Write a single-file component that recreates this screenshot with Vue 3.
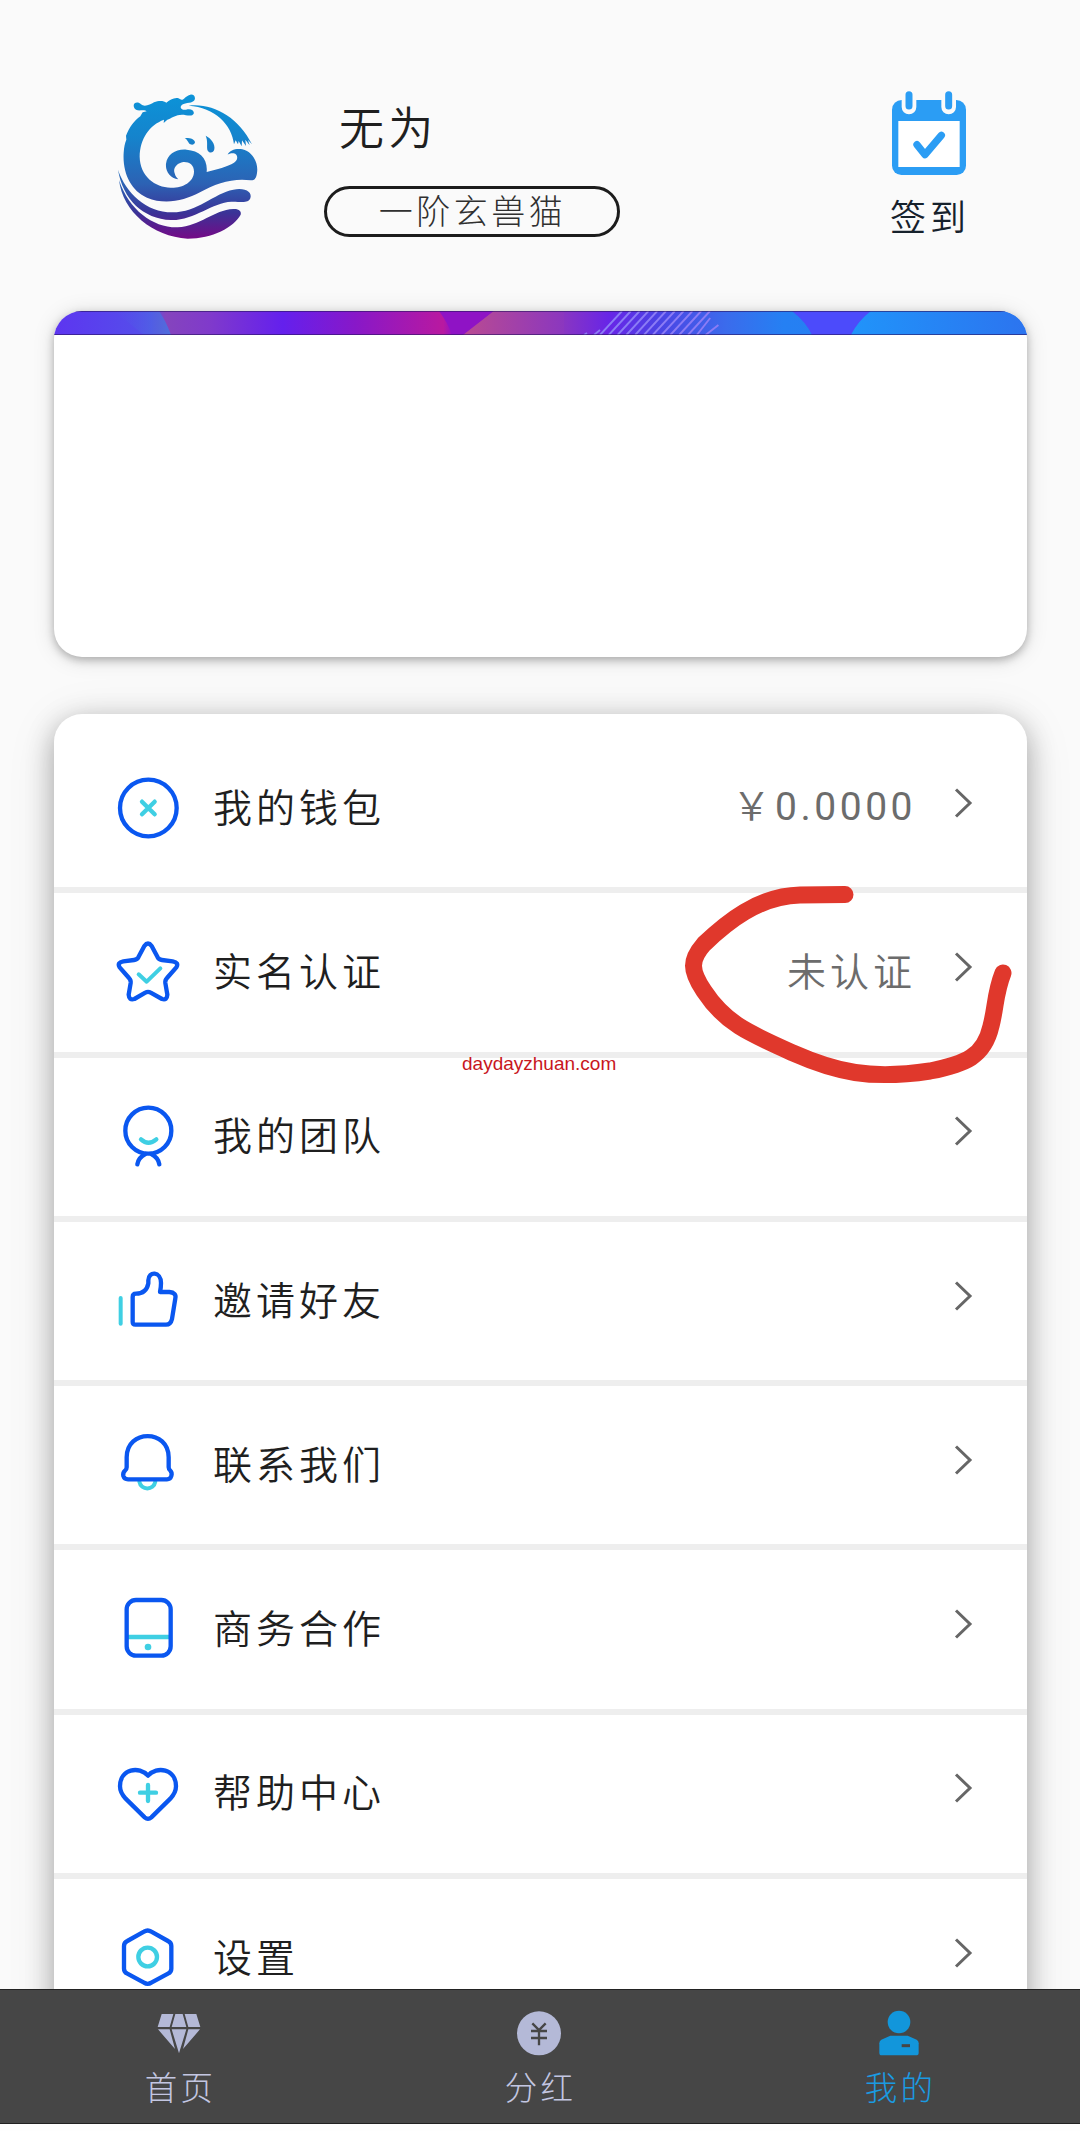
<script setup>
const items = [
  { id: 'wallet', label: '我的钱包', sign: '￥', amount: '0.0000' },
  { id: 'verify', label: '实名认证', note: '未认证' },
  { id: 'team', label: '我的团队' },
  { id: 'invite', label: '邀请好友' },
  { id: 'contact', label: '联系我们' },
  { id: 'business', label: '商务合作' },
  { id: 'help', label: '帮助中心' },
  { id: 'settings', label: '设置' },
]
const hatch = Array.from({ length: 13 }, (_, i) => i)
</script>

<template>
  <div class="page">
    <main class="content">
      <header class="profile">
        <svg class="logo" viewBox="0 0 600 570">
          <defs>
            <linearGradient id="logoFill" gradientUnits="userSpaceOnUse" x1="0" y1="75" x2="0" y2="505">
              <stop offset="0" stop-color="#0c93d8" />
              <stop offset="0.3" stop-color="#1583cc" />
              <stop offset="0.62" stop-color="#2c62b4" />
              <stop offset="0.82" stop-color="#3a3397" />
              <stop offset="1" stop-color="#740a86" />
            </linearGradient>
          </defs>
          <g fill="url(#logoFill)">
            <path d="M131 107C131 96 146 95 153 103C163 112 181 104 192 97C208 91 222 93 229 98C240 90 258 78 271 88C280 94 286 77 301 74C314 72 319 86 311 93C303 101 280 97 273 108C269 116 278 121 288 119C303 114 314 122 311 131C306 141 288 134 276 134C258 134 243 145 232 149L221 159L222 149C178 165 150 206 149 260C150 318 195 352 242 353C278 354 311 337 312 305C312 284 297 275 280 276C260 279 248 296 254 310C256 319 260 323 265 328C240 324 226 305 228 281C232 253 258 236 290 239C330 242 354 267 350 306C381 298 412 290 432 278C446 269 444 252 431 250C423 249 418 251 413 254C419 240 438 235 457 238C488 245 506 279 501 309C499 325 494 331 482 331C431 323 377 340 330 367C281 393 224 405 171 383C123 362 97 309 101 248C102 231 105 218 109 209L108 197C118 173 132 152 151 139L163 127L150 140L158 127L170 124C164 118 153 122 143 121C136 119 131 114 131 107Z" />
            <path d="M296 107C366 98 444 139 486 223L474 210L479 226L466 209L468 228L456 211L455 229L446 213L444 223L437 211L432 223C426 164 374 112 296 107Z" />
            <path d="M284 204C300 203 314 207 315 217C314 225 303 227 297 220C293 214 291 208 284 204ZM347 197C364 205 376 223 373 238C370 251 355 250 352 239C350 226 354 213 347 197Z" />
            <path d="M84 299C108 370 168 426 247 427C322 427 372 370 430 359C465 352 488 366 481 385C475 402 449 394 424 395C367 397 312 452 243 450C159 446 99 389 84 299Z" />
            <path d="M87 330C117 421 191 474 263 472C331 468 371 420 430 417C447 416 455 424 452 434C432 471 367 506 293 506C188 500 98 425 87 330Z" />
          </g>
        </svg>
        <div class="identity">
          <div class="name">无为</div>
          <div class="rank">一阶玄兽猫</div>
        </div>
        <div class="checkin">
          <svg class="calendar" viewBox="0 0 228 258">
            <path d="M32 30H196A29 29 0 0 1 225 59V227A28 28 0 0 1 197 255H31A28 28 0 0 1 3 227V59A29 29 0 0 1 32 30Z" fill="#2b9df4" />
            <rect x="22" y="93" width="184" height="138" fill="#fff" />
            <path d="M54 14V51M173 14V51" stroke="#fafafa" stroke-width="44" stroke-linecap="round" />
            <path d="M54 14V48M173 14V48" stroke="#2b9df4" stroke-width="21" stroke-linecap="round" />
            <path d="M78 164L102 194L151 136" fill="none" stroke="#2b9df4" stroke-width="22" stroke-linecap="round" stroke-linejoin="round" />
          </svg>
          <span>签到</span>
        </div>
      </header>

      <section class="banner">
        <svg viewBox="0 0 973 24" preserveAspectRatio="none">
          <defs>
            <linearGradient id="base" gradientUnits="userSpaceOnUse" x1="0" y1="0" x2="973" y2="0">
              <stop offset="0" stop-color="#5d35f0" />
              <stop offset="0.1" stop-color="#5450ea" />
              <stop offset="0.115" stop-color="#8544bd" />
              <stop offset="0.16" stop-color="#803acb" />
              <stop offset="0.235" stop-color="#6420ed" />
              <stop offset="0.31" stop-color="#8818c8" />
              <stop offset="0.4" stop-color="#b919a0" />
              <stop offset="0.41" stop-color="#9112c8" />
              <stop offset="0.45" stop-color="#a13bac" />
              <stop offset="0.52" stop-color="#8b37bf" />
              <stop offset="0.57" stop-color="#6825e7" />
              <stop offset="0.62" stop-color="#4c42e4" />
              <stop offset="0.69" stop-color="#3b6bec" />
              <stop offset="0.75" stop-color="#2580f3" />
              <stop offset="1" stop-color="#2b79f0" />
            </linearGradient>
            <linearGradient id="warm" x1="0" x2="1">
              <stop offset="0" stop-color="#ba4b91" />
              <stop offset="1" stop-color="#8b37bf" />
            </linearGradient>
            <linearGradient id="sky" x1="0" x2="1">
              <stop offset="0" stop-color="#2094fa" />
              <stop offset="1" stop-color="#2c74ef" />
            </linearGradient>
            <linearGradient id="azure" x1="0" x2="1">
              <stop offset="0" stop-color="#5450ea" stop-opacity="0" />
              <stop offset="1" stop-color="#4b70df" />
            </linearGradient>
          </defs>
          <rect width="973" height="24" fill="url(#base)" />
          <path d="M60 0H105Q112 10 117 24H90Z" fill="url(#azure)" />
          <path d="M385 0H440L409 24H398Q394 12 385 0Z" fill="#8f13c5" />
          <path d="M409 24L440 0H510V24Z" fill="url(#warm)" />
          <path d="M738 0H817Q804 10 797 24H758Q752 11 738 0Z" fill="#4c4bfb" />
          <path d="M817 0H973V24H797Q804 10 817 0Z" fill="url(#sky)" />
          <g stroke="#8c7cf5" stroke-width="1.9">
            <line v-for="n in hatch" :key="n" :x1="546 + n * 8.8" y1="24" :x2="n > 10 ? 566 + n * 8.2 : 568 + n * 8.8" :y2="n > 10 ? (n - 10) * 7 : 0" />
            <path d="M530 24l3-2M540 24l6-5" />
          </g>
          <path d="M0 .5H973M0 23.5H973" stroke="#291463" stroke-opacity=".6" />
        </svg>
      </section>

      <section class="menu">
        <div v-for="item in items" :key="item.id" class="row">
          <svg class="icon" viewBox="0 0 240 240">
            <template v-if="item.id === 'wallet'">
              <circle cx="121" cy="120" r="85" />
              <path class="accent" d="M102 101L140 139M140 101L102 139" />
            </template>
            <template v-else-if="item.id === 'verify'">
              <path d="M109 42Q120 27 131 42L149 76Q153 83 162 84L194 88Q214 92 205 106L177 138Q171 144 172 153L178 188Q177 206 162 201L128 182Q120 177 112 182L79 201Q63 206 62 188L68 153Q69 144 63 138L35 106Q26 92 46 88L78 84Q87 83 91 76Z" />
              <path class="accent slim" d="M92 127L116 149L157 109" />
            </template>
            <template v-else-if="item.id === 'team'">
              <circle cx="121" cy="101" r="69" />
              <path class="accent" d="M99 127Q121 147 145 127" />
              <path d="M88 202Q91 182 112 171M154 202Q151 182 130 171" />
            </template>
            <template v-else-if="item.id === 'invite'">
              <path class="accent slim" d="M38 111V188" />
              <path d="M84 98Q115 98 121 67V58C121 30 159 30 159 66Q159 80 156 93H184Q206 95 202 112L192 174Q188 191 174 191H82Q74 191 74 183V108Q74 98 84 98Z" />
            </template>
            <template v-else-if="item.id === 'contact'">
              <path class="accent slim" d="M94 170C99 197 137 197 142 170" />
              <path d="M56 97C56 12 182 12 182 97V127Q182 133 187 137Q193 143 190 153Q187 163 177 163H60Q49 163 46 153Q44 143 51 137Q56 133 56 127Z" />
            </template>
            <template v-else-if="item.id === 'business'">
              <path class="accent" d="M59 141H185" />
              <rect x="56" y="30" width="132" height="167" rx="28" />
              <circle class="dot" cx="120" cy="171" r="10" />
            </template>
            <template v-else-if="item.id === 'help'">
              <path d="M120 65C94 35 36 44 36 97Q36 116 53 134L110 190Q120 199 130 190L187 134Q204 116 204 97C204 44 146 35 120 65Z" />
              <path class="accent" d="M120 93V141M96 116H144" />
            </template>
            <template v-else>
              <path d="M108 41Q119 34 130 41L180 69Q190 74 190 84V152Q190 162 180 167L130 194Q119 201 108 194L58 167Q48 162 48 152V84Q48 74 58 69Z" />
              <circle class="accent" cx="119" cy="117" r="28" />
            </template>
          </svg>
          <span class="label">{{ item.label }}</span>
          <span v-if="item.amount" class="value">{{ item.sign }}<span class="digits">{{ item.amount }}</span></span>
          <span v-else-if="item.note" class="value">{{ item.note }}</span>
          <svg class="chevron" viewBox="0 0 20 32"><path d="M3 2.500L17 16L3 29.500" /></svg>
        </div>
      </section>
    </main>

    <nav class="tabs">
      <div class="tab">
        <svg viewBox="0 0 144 144">
          <path fill="#b4b9d7" d="M20 15H55L44 54H8ZM61 15H83L94 54H50ZM89 15H124L136 54H100ZM9 61H44L60 120ZM50 61H94L72 133ZM100 61H135L84 120Z" />
        </svg>
        <span>首页</span>
      </div>
      <div class="tab">
        <svg viewBox="0 0 144 144">
          <circle cx="72" cy="73" r="66" fill="#b4b9d7" />
          <path d="M52 43L72 63L92 43M48 66H96M48 87H96M72 63V109" fill="none" stroke="#464646" stroke-width="7" />
        </svg>
        <span>分红</span>
      </div>
      <div class="tab">
        <svg viewBox="0 0 144 144">
          <circle cx="72" cy="39" r="34" fill="#1296db" />
          <path d="M46 80H98L125 92Q131 96 131 103V131Q131 139 123 139H20Q13 139 13 131V103Q13 96 19 92Z" fill="#1296db" />
          <path d="M80 110H105" stroke="#464646" stroke-width="9" />
        </svg>
        <span class="current">我的</span>
      </div>
    </nav>
    <div class="gesture-bar"></div>

    <svg class="scribble" viewBox="0 0 340 220">
      <path d="M165 25.500L120 26C78 27 46 54 24 75C10 91 10 101 24 122C45 154 68 164 113 184C156 203 190 211 250 202C285 195 304 188 311 157C316 138 315 124 323 104" />
    </svg>
    <div class="watermark">daydayzhuan.com</div>
  </div>
</template>

<style>
body {
  background: #fff;
}
</style>

<style scoped>
.page {
  position: relative;
  display: flex;
  flex-direction: column;
  width: 1080px;
  height: 2131px;
  overflow: hidden;
  background: #fff;
  font-family: "Noto Sans CJK SC", sans-serif;
  font-weight: 350;
  color: #1f1f1f;
}
.content {
  flex: none;
  height: 1989px;
  overflow: hidden;
  background: #fafafa;
}
.profile {
  display: flex;
  align-items: flex-start;
  height: 241px;
  padding: 70px 110px 0 90px;
}
.logo {
  flex: none;
  width: 200px;
  height: 190px;
}
.identity {
  flex: 1;
  padding: 23px 0 0 34px;
}
.name {
  margin-left: 15px;
  font-size: 45px;
  line-height: 65px;
  letter-spacing: 4.2px;
}
.rank {
  box-sizing: border-box;
  width: 296px;
  height: 51px;
  margin-top: 28px;
  padding-left: 1px;
  border: 3px solid #1c1c1c;
  border-radius: 26px;
  font-size: 34px;
  font-weight: 300;
  line-height: 42px;
  letter-spacing: 3.5px;
  text-align: center;
  color: #303030;
}
.checkin {
  display: flex;
  flex-direction: column;
  align-items: center;
  width: 82px;
  padding-top: 20px;
  font-size: 36px;
  line-height: 52px;
  color: #16212c;
}
.calendar {
  width: 76px;
  height: 86px;
}
.checkin span {
  margin: 13px -2px 0 0;
  letter-spacing: 4px;
}
.banner {
  width: 973px;
  height: 346px;
  margin-left: 54px;
  overflow: hidden;
  border-radius: 28px;
  background: #fff;
  box-shadow: 0 3px 8px rgba(0, 0, 0, 0.26), 0 2px 22px rgba(0, 0, 0, 0.13);
}
.banner svg {
  display: block;
  width: 973px;
  height: 24px;
}
.menu {
  width: 973px;
  height: 1340px;
  margin: 57px 0 0 54px;
  padding-top: 15px;
  border-radius: 28px;
  background: #fff;
  box-shadow: 0 8px 28px rgba(0, 0, 0, 0.3), 0 8px 50px rgba(0, 0, 0, 0.1);
}
.row {
  display: flex;
  align-items: center;
  box-sizing: border-box;
  height: 164.3px;
  padding: 0 54px;
  border-bottom: 6px solid #eee;
}
.icon {
  flex: none;
  width: 80px;
  height: 80px;
  fill: none;
  stroke: #0a57f0;
  stroke-width: 13;
  stroke-linecap: round;
  stroke-linejoin: round;
}
.icon .accent {
  stroke: #3fcfe3;
}
.icon .slim {
  stroke-width: 12;
}
.icon .dot {
  fill: #3fcfe3;
  stroke: none;
}
.label {
  flex: 1;
  margin: 0 0 7px 25px;
  font-size: 39px;
  line-height: 56px;
  letter-spacing: 4px;
}
.value {
  margin: 0 37px 7px 0;
  font-size: 39px;
  line-height: 56px;
  letter-spacing: 4px;
  color: #6c6c6c;
}
.digits {
  font-family: Roboto, sans-serif;
  font-weight: 400;
  letter-spacing: 3.5px;
}
.chevron {
  width: 20px;
  height: 32px;
  margin-bottom: 11px;
  fill: none;
  stroke: #666;
  stroke-width: 3;
}
.tabs {
  display: flex;
  flex: none;
  box-sizing: border-box;
  height: 135px;
  border-top: 1px solid #222;
  border-bottom: 1px solid #222;
  background: #464646;
}
.tab {
  display: flex;
  flex: 1;
  flex-direction: column;
  align-items: center;
  padding: 19px 2px 0 0;
  font-size: 32.5px;
  font-weight: 300;
  line-height: 46px;
  color: #c3c6e2;
}
.tab svg {
  width: 48px;
  height: 48px;
}
.tab span {
  margin: 6px -3px 0 0;
  letter-spacing: 3.3px;
}
.tab .current {
  color: #1a9be2;
}
.gesture-bar {
  flex: 1;
  background: #fefefe;
}
.scribble {
  position: absolute;
  top: 869px;
  left: 680px;
  width: 340px;
  height: 220px;
  fill: none;
  stroke: #e0382c;
  stroke-width: 17;
  stroke-linecap: round;
  stroke-linejoin: round;
}
.watermark {
  position: absolute;
  top: 1053px;
  left: 462px;
  font-family: "Liberation Sans", sans-serif;
  font-size: 19px;
  font-weight: 400;
  line-height: 22px;
  color: #c8161d;
}
</style>
